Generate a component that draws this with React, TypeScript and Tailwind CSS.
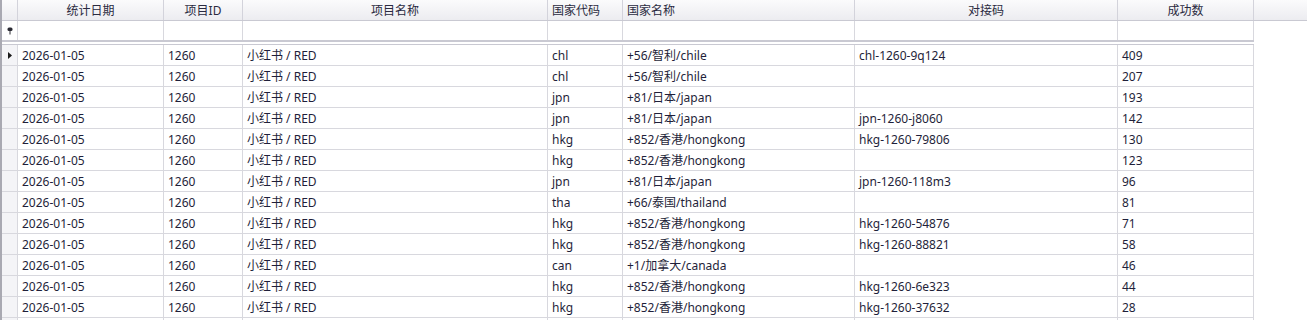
import React from "react";

const font = { fontFamily: '"Noto Sans", "Noto Sans CJK SC", sans-serif' };

type Row = [string, string, string, string, string, string, string];

const rows: Row[] = [
  ["2026-01-05", "1260", "小红书 / RED", "chl", "+56/智利/chile", "chl-1260-9q124", "409"],
  ["2026-01-05", "1260", "小红书 / RED", "chl", "+56/智利/chile", "", "207"],
  ["2026-01-05", "1260", "小红书 / RED", "jpn", "+81/日本/japan", "", "193"],
  ["2026-01-05", "1260", "小红书 / RED", "jpn", "+81/日本/japan", "jpn-1260-j8060", "142"],
  ["2026-01-05", "1260", "小红书 / RED", "hkg", "+852/香港/hongkong", "hkg-1260-79806", "130"],
  ["2026-01-05", "1260", "小红书 / RED", "hkg", "+852/香港/hongkong", "", "123"],
  ["2026-01-05", "1260", "小红书 / RED", "jpn", "+81/日本/japan", "jpn-1260-118m3", "96"],
  ["2026-01-05", "1260", "小红书 / RED", "tha", "+66/泰国/thailand", "", "81"],
  ["2026-01-05", "1260", "小红书 / RED", "hkg", "+852/香港/hongkong", "hkg-1260-54876", "71"],
  ["2026-01-05", "1260", "小红书 / RED", "hkg", "+852/香港/hongkong", "hkg-1260-88821", "58"],
  ["2026-01-05", "1260", "小红书 / RED", "can", "+1/加拿大/canada", "", "46"],
  ["2026-01-05", "1260", "小红书 / RED", "hkg", "+852/香港/hongkong", "hkg-1260-6e323", "44"],
  ["2026-01-05", "1260", "小红书 / RED", "hkg", "+852/香港/hongkong", "hkg-1260-37632", "28"],
  // next row is scrolled below the edge: only its grid lines show
  ["", "", "", "", "", "", ""],
];

// widths include the 1px right border
const cols = [
  { title: "统计日期", w: "w-[146px]", center: true },
  { title: "项目ID", w: "w-[79px]", center: true },
  { title: "项目名称", w: "w-[305px]", center: true },
  { title: "国家代码", w: "w-[75px]", center: false },
  { title: "国家名称", w: "w-[232px]", center: false },
  { title: "对接码", w: "w-[263px]", center: true },
  { title: "成功数", w: "w-[136px]", center: true },
];

function FilterPin() {
  return (
    <svg width="6" height="8" viewBox="0 0 6 8">
      <rect x="0.5" y="0.5" width="5" height="3.5" rx="1.5" fill="#2a2a33" />
      <rect x="2.5" y="3.5" width="1" height="4" fill="#2a2a33" />
    </svg>
  );
}

function RowArrow() {
  return (
    <svg width="4" height="7" viewBox="0 0 4 7">
      <path d="M0 0 L4 3.5 L0 7 Z" fill="#1a1a1a" />
    </svg>
  );
}

export default function App() {
  return (
    <div className="w-[1307px] h-[320px] overflow-hidden bg-white text-[12px] text-[#1f1f3a]" style={font}>
      <div className="flex flex-col border-l-2 border-[#a9a9b2] h-full">
        {/* Header */}
        <div className="flex h-[21px] border-b border-[#c9c9d2] bg-gradient-to-b from-[#fbfbfc] to-[#ececf0] shrink-0">
          <div className="w-[16px] border-r border-[#d3d3db] shrink-0" />
          {cols.map((c) => (
            <div
              key={c.title}
              className={`${c.w} shrink-0 border-r border-[#d3d3db] flex items-center leading-none pt-[1px] text-[#2a2a40] ${
                c.center ? "justify-center" : "pl-[4px]"
              }`}
            >
              {c.title}
            </div>
          ))}
          <div className="flex-1" />
        </div>

        {/* Auto filter row */}
        <div className="flex h-[19px] shrink-0">
          <div className="w-[16px] border-r border-[#d8d8de] flex items-center justify-center shrink-0">
            <FilterPin />
          </div>
          {cols.map((c) => (
            <div key={c.title} className={`${c.w} shrink-0 border-r border-[#d8d8de]`} />
          ))}
        </div>

        {/* Separator */}
        <div className="w-[1252px] shrink-0 border-t-2 border-b border-t-[#c9c9d2] border-b-[#c9c9d2] h-[5px]" />

        {/* Data rows */}
        <div className="flex flex-col">
          {rows.map((r, i) => (
            <div key={i} className="flex h-[21px] shrink-0">
              <div className="w-[16px] border-r border-b border-[#d8d8de] bg-[#f4f4f7] flex items-center justify-center shrink-0">
                {i === 0 && <RowArrow />}
              </div>
              {cols.map((c, j) => (
                <div
                  key={c.title}
                  className={`${c.w} shrink-0 border-r border-b border-[#d8d8de] flex items-center pl-[4px] pt-[1px] whitespace-nowrap overflow-hidden leading-none`}
                >
                  {r[j]}
                </div>
              ))}
            </div>
          ))}
        </div>
      </div>
    </div>
  );
}
